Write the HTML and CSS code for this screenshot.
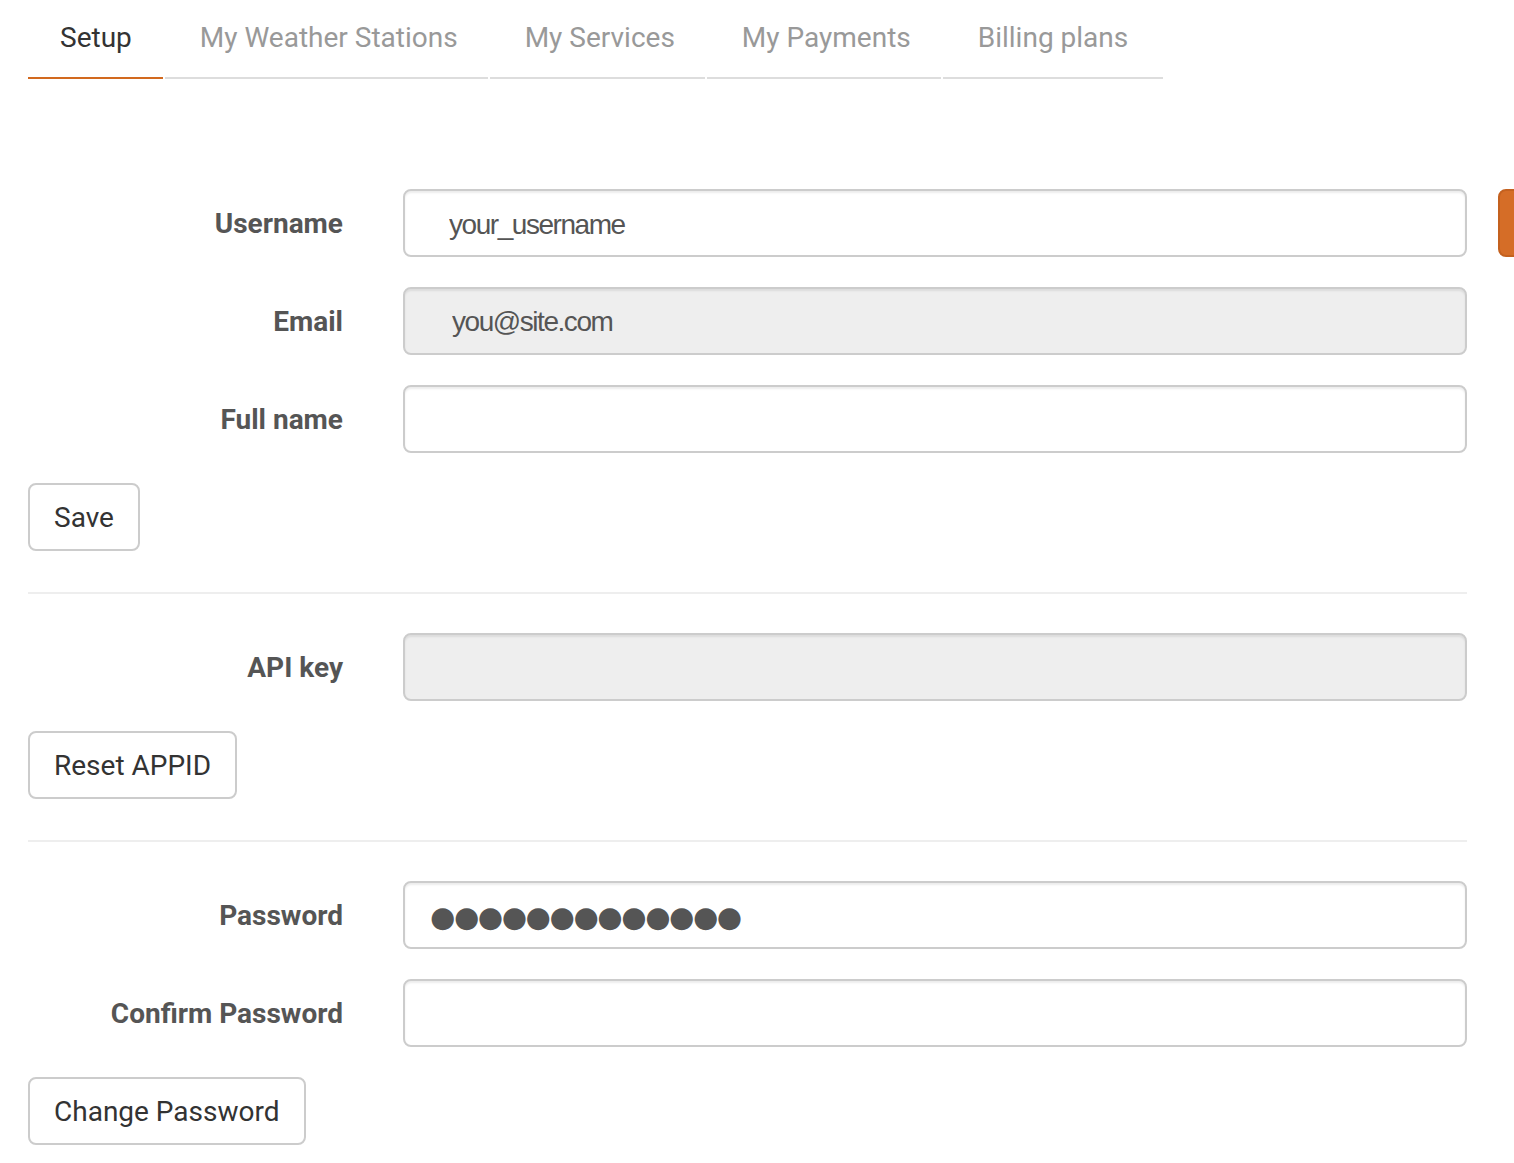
FILE: index.html
```html
<!DOCTYPE html>
<html>
<head>
<meta charset="utf-8">
<link rel="stylesheet" href="styles.css">
</head>
<body>
<div class="page">
  <div class="main">
    <ul class="tabs">
      <li class="tab active">Setup</li>
      <li class="tab">My Weather Stations</li>
      <li class="tab">My Services</li>
      <li class="tab">My Payments</li>
      <li class="tab">Billing plans</li>
    </ul>

    <form class="section first">
      <div class="row">
        <label class="label">Username</label>
        <input class="control indent" type="text" value="your_username">
      </div>
      <div class="row">
        <label class="label">Email</label>
        <input class="control indent readonly" type="text" value="you@site.com" readonly>
      </div>
      <div class="row">
        <label class="label">Full name</label>
        <input class="control" type="text" value="">
      </div>
      <button type="button" class="btn">Save</button>
    </form>

    <hr class="sep">

    <form class="section">
      <div class="row">
        <label class="label">API key</label>
        <input class="control readonly" type="text" value="" readonly>
      </div>
      <button type="button" class="btn">Reset APPID</button>
    </form>

    <hr class="sep">

    <form class="section">
      <div class="row">
        <label class="label">Password</label>
        <input class="control dots" type="text" value="●●●●●●●●●●●●●">
      </div>
      <div class="row">
        <label class="label">Confirm Password</label>
        <input class="control" type="text" value="">
      </div>
      <button type="button" class="btn">Change Password</button>
    </form>
  </div>
  <div class="aside">
    <button type="button" class="btn-orange" aria-label="Edit"></button>
  </div>
</div>
</body>
</html>
```

FILE: styles.css
```css
html, body {
  margin: 0;
  padding: 0;
  background: #fff;
  overflow: hidden;
}
body {
  font-family: Roboto, "Liberation Sans", sans-serif;
  color: #333;
}
.page {
  display: flex;
  padding-left: 28px;
  width: 1700px;
}
.main {
  width: 1439px;
  flex: none;
}
.aside {
  flex: none;
  padding-top: 189px;
  margin-left: 31px;
}
.btn-orange {
  display: block;
  width: 120px;
  height: 68px;
  border: 2px solid #c4611f;
  border-radius: 8px;
  background: #d56d27;
  padding: 0;
}
.tabs {
  list-style: none;
  margin: 0;
  padding: 0;
  display: flex;
}
.tab {
  font-size: 28px;
  line-height: 40px;
  padding: 18px 30px 19px 35px;
  color: #999;
  border-bottom: 2px solid #ddd;
  margin-right: 2px;
}
.tab:last-child {
  padding-right: 35px;
}
.tab.active {
  color: #333;
  border-bottom-color: #d2691e;
  padding-right: 31px;
  padding-left: 32px;
}
.section {
  display: flex;
  flex-direction: column;
  gap: 30px;
  align-items: flex-start;
}
.section.first {
  margin-top: 110px;
}
.row {
  display: flex;
  align-items: center;
  gap: 60px;
  width: 100%;
}
.label {
  width: 315px;
  flex: none;
  text-align: right;
  font-weight: 700;
  font-size: 28px;
  color: #555;
}
.control {
  flex: 1;
  box-sizing: border-box;
  height: 68px;
  border: 2px solid #ccc;
  border-radius: 8px;
  background: #fff;
  font-family: "Liberation Sans", Arial, sans-serif;
  font-size: 28px;
  letter-spacing: -1.45px;
  color: #555;
  padding: 3px 24px 0;
  outline: none;
  box-shadow: inset 0 2px 2px rgba(0,0,0,0.075);
}
.control.indent {
  padding-left: 44px;
}
.control.readonly {
  background: #eee;
}
.control.readonly.indent {
  padding-left: 47px;
  padding-top: 2px;
}
.control.dots {
  font-family: "DejaVu Sans", sans-serif;
  font-size: 29px;
  letter-spacing: -1.4px;
  padding-left: 25px;
  padding-top: 4px;
}
.btn {
  box-sizing: border-box;
  height: 68px;
  border: 2px solid #ccc;
  border-radius: 8px;
  background: #fff;
  font-family: Roboto, sans-serif;
  font-size: 28px;
  color: #333;
  padding: 0 24px;
}
.sep {
  border: 0;
  border-top: 2px solid #eee;
  margin: 41px 0 39px;
}
```
